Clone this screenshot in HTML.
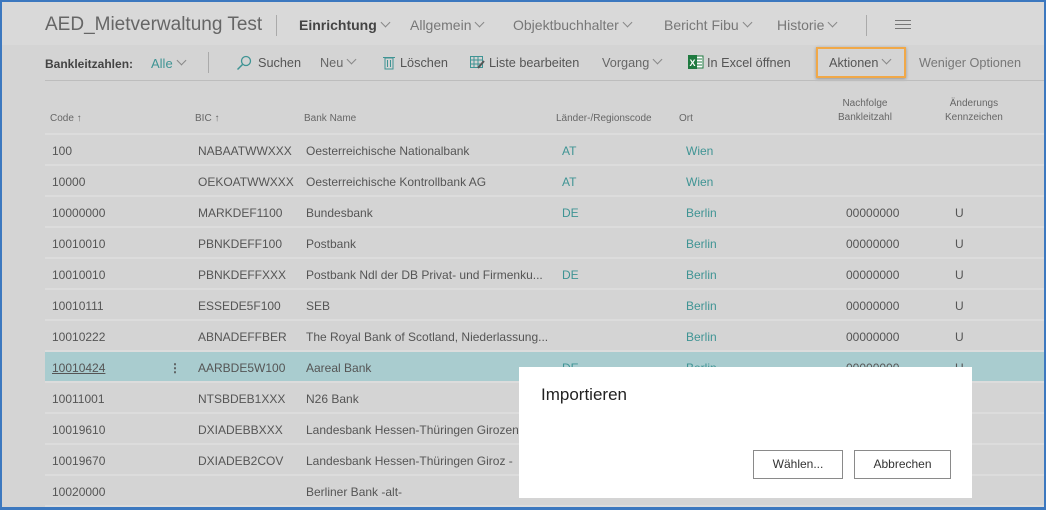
<!DOCTYPE html>
<html><head><meta charset="utf-8"><style>
*{margin:0;padding:0;box-sizing:border-box}
body{width:1046px;height:510px;overflow:hidden;font-family:"Liberation Sans",sans-serif;background:#d4d4d4;position:relative;color:#505050}
.frame{position:absolute;inset:0;border:2px solid #3c78bf;border-bottom-width:3px;pointer-events:none;z-index:10}
.top{position:absolute;left:0;top:0;width:1046px;height:45px;background:#d9d9d9}
.t{position:absolute;white-space:nowrap}
.chev{display:inline-block;width:7px;height:7px;border-right:1px solid #888;border-bottom:1px solid #888;transform:rotate(45deg);margin:0 0 4px 5px}
.tb{position:absolute;left:45px;top:80px;width:1001px;height:1px;background:#bdbdbd}
.row{position:absolute;left:45px;width:1001px;height:31px;border-bottom:2px solid #dcdcdc}
.c{position:absolute;top:9px;font-size:12px;color:#555;white-space:nowrap}
.b{color:#3f9494}
.h{position:absolute;font-size:10px;color:#666;white-space:nowrap;line-height:14px}
.dlg{position:absolute;left:519px;top:367px;width:453px;height:131px;background:#fff;z-index:5}
.btn{position:absolute;top:83px;height:29px;border:1px solid #8a8a8a;font-size:12px;color:#333;text-align:center;line-height:27px;background:#fff}
.tt{font-size:12.7px}
</style></head><body>
<div class="frame"></div>
<div class="top"></div>
<div class="t" style="left:45px;top:14px;font-size:19px;color:#666">AED_Mietverwaltung Test</div>
<div style="position:absolute;left:276px;top:15px;width:1px;height:21px;background:#aaa"></div>
<div class="t" style="left:299px;top:17px;font-size:14px;color:#444;font-weight:bold">Einrichtung<span class="chev"></span></div>
<div class="t" style="left:410px;top:17px;font-size:14px;color:#777">Allgemein<span class="chev"></span></div>
<div class="t" style="left:513px;top:17px;font-size:14px;color:#777">Objektbuchhalter<span class="chev"></span></div>
<div class="t" style="left:664px;top:17px;font-size:14px;color:#777">Bericht Fibu<span class="chev"></span></div>
<div class="t" style="left:777px;top:17px;font-size:14px;color:#777">Historie<span class="chev"></span></div>
<div style="position:absolute;left:866px;top:15px;width:1px;height:21px;background:#aaa"></div>
<div style="position:absolute;left:895px;top:20px;width:16px;height:9px;border-top:1px solid #777;border-bottom:1px solid #777"><div style="margin-top:3px;height:1px;background:#777"></div></div>

<div class="t" style="left:45px;top:57px;font-size:12px;color:#444;font-weight:bold">Bankleitzahlen:</div>
<div class="t" style="left:151px;top:56px;font-size:13px;color:#3f9494">Alle<span class="chev"></span></div>
<div style="position:absolute;left:208px;top:52px;width:1px;height:21px;background:#aaa"></div>
<svg style="position:absolute;left:236px;top:55px" width="16" height="16"><circle cx="10" cy="6" r="4.5" fill="none" stroke="#3f9494" stroke-width="1.3"/><line x1="6.5" y1="9.5" x2="1.5" y2="14.5" stroke="#3f9494" stroke-width="1.5"/></svg>
<div class="t tt" style="left:258px;top:56px;color:#555">Suchen</div>
<div class="t tt" style="left:320px;top:56px;color:#666">Neu<span class="chev"></span></div>
<svg style="position:absolute;left:383px;top:55px" width="12" height="15"><rect x="2" y="3" width="8" height="11" fill="none" stroke="#3f9494"/><line x1="0" y1="2.5" x2="12" y2="2.5" stroke="#3f9494"/><line x1="4.5" y1="5" x2="4.5" y2="12" stroke="#3f9494"/><line x1="7.5" y1="5" x2="7.5" y2="12" stroke="#3f9494"/></svg>
<div class="t tt" style="left:400px;top:56px;color:#555">Löschen</div>
<svg style="position:absolute;left:470px;top:56px" width="15" height="13"><rect x="0.5" y="0.5" width="12" height="11" fill="none" stroke="#3f9494"/><path d="M0 4H13M0 8H13M4 0V12M8 0V12" stroke="#3f9494"/><path d="M8 12L14 5" stroke="#555" stroke-width="2"/></svg>
<div class="t tt" style="left:489px;top:56px;color:#555">Liste bearbeiten</div>
<div class="t tt" style="left:602px;top:56px;color:#666">Vorgang<span class="chev"></span></div>
<svg style="position:absolute;left:688px;top:55px" width="16" height="14"><rect x="7" y="1" width="8" height="12" fill="#fff" stroke="#1f7a40"/><path d="M9 4H14M9 7H14M9 10H14" stroke="#1f7a40"/><rect x="0" y="0" width="9" height="14" fill="#1f7a40"/><text x="1.5" y="11" font-size="9" fill="#fff" font-family="Liberation Sans" font-weight="bold">X</text></svg>
<div class="t tt" style="left:707px;top:56px;color:#555">In Excel öffnen</div>
<div style="position:absolute;left:816px;top:47px;width:90px;height:31px;border:2px solid #f0a848;box-shadow:0 1px 3px rgba(0,0,0,.3)"></div>
<div class="t tt" style="left:829px;top:56px;color:#555">Aktionen<span class="chev"></span></div>
<div class="t tt" style="left:919px;top:56px;color:#777">Weniger Optionen</div>
<div class="tb"></div>

<div class="h" style="left:50px;top:112px">Code ↑</div>
<div class="h" style="left:195px;top:112px">BIC ↑</div>
<div class="h" style="left:304px;top:112px">Bank Name</div>
<div class="h" style="left:556px;top:112px">Länder-/Regionscode</div>
<div class="h" style="left:679px;top:112px">Ort</div>
<div class="h" style="left:838px;top:97px;text-align:center">Nachfolge<br>Bankleitzahl</div>
<div class="h" style="left:945px;top:97px;text-align:center">Änderungs<br>Kennzeichen</div>
<div style="position:absolute;left:45px;top:133px;width:1001px;height:2px;background:#dcdcdc"></div>

<div class="row" style="top:135px"><span class="c" style="left:7px">100</span><span class="c" style="left:153px">NABAATWWXXX</span><span class="c" style="left:261px">Oesterreichische Nationalbank</span><span class="c b" style="left:517px">AT</span><span class="c b" style="left:641px">Wien</span></div>
<div class="row" style="top:166px"><span class="c" style="left:7px">10000</span><span class="c" style="left:153px">OEKOATWWXXX</span><span class="c" style="left:261px">Oesterreichische Kontrollbank AG</span><span class="c b" style="left:517px">AT</span><span class="c b" style="left:641px">Wien</span></div>
<div class="row" style="top:197px"><span class="c" style="left:7px">10000000</span><span class="c" style="left:153px">MARKDEF1100</span><span class="c" style="left:261px">Bundesbank</span><span class="c b" style="left:517px">DE</span><span class="c b" style="left:641px">Berlin</span><span class="c" style="left:801px">00000000</span><span class="c" style="left:910px">U</span></div>
<div class="row" style="top:228px"><span class="c" style="left:7px">10010010</span><span class="c" style="left:153px">PBNKDEFF100</span><span class="c" style="left:261px">Postbank</span><span class="c b" style="left:641px">Berlin</span><span class="c" style="left:801px">00000000</span><span class="c" style="left:910px">U</span></div>
<div class="row" style="top:259px"><span class="c" style="left:7px">10010010</span><span class="c" style="left:153px">PBNKDEFFXXX</span><span class="c" style="left:261px">Postbank Ndl der DB Privat- und Firmenku...</span><span class="c b" style="left:517px">DE</span><span class="c b" style="left:641px">Berlin</span><span class="c" style="left:801px">00000000</span><span class="c" style="left:910px">U</span></div>
<div class="row" style="top:290px"><span class="c" style="left:7px">10010111</span><span class="c" style="left:153px">ESSEDE5F100</span><span class="c" style="left:261px">SEB</span><span class="c b" style="left:641px">Berlin</span><span class="c" style="left:801px">00000000</span><span class="c" style="left:910px">U</span></div>
<div class="row" style="top:321px"><span class="c" style="left:7px">10010222</span><span class="c" style="left:153px">ABNADEFFBER</span><span class="c" style="left:261px">The Royal Bank of Scotland, Niederlassung...</span><span class="c b" style="left:641px">Berlin</span><span class="c" style="left:801px">00000000</span><span class="c" style="left:910px">U</span></div>
<div class="row" style="top:352px;background:#a9cccf"><span class="c" style="left:7px;text-decoration:underline">10010424</span><span class="c" style="left:124px;font-weight:bold">⋮</span><span class="c" style="left:153px">AARBDE5W100</span><span class="c" style="left:261px">Aareal Bank</span><span class="c b" style="left:517px">DE</span><span class="c b" style="left:641px">Berlin</span><span class="c" style="left:801px">00000000</span><span class="c" style="left:910px">U</span></div>
<div class="row" style="top:383px"><span class="c" style="left:7px">10011001</span><span class="c" style="left:153px">NTSBDEB1XXX</span><span class="c" style="left:261px">N26 Bank</span></div>
<div class="row" style="top:414px"><span class="c" style="left:7px">10019610</span><span class="c" style="left:153px">DXIADEBBXXX</span><span class="c" style="left:261px">Landesbank Hessen-Thüringen Girozentrale</span></div>
<div class="row" style="top:445px"><span class="c" style="left:7px">10019670</span><span class="c" style="left:153px">DXIADEB2COV</span><span class="c" style="left:261px">Landesbank Hessen-Thüringen Giroz -</span></div>
<div class="row" style="top:476px"><span class="c" style="left:7px">10020000</span><span class="c" style="left:261px">Berliner Bank -alt-</span></div>

<div class="dlg">
<div class="t" style="left:22px;top:18px;font-size:17px;color:#222">Importieren</div>
<div class="btn" style="left:234px;width:90px">Wählen...</div>
<div class="btn" style="left:335px;width:97px">Abbrechen</div>
</div>
</body></html>
